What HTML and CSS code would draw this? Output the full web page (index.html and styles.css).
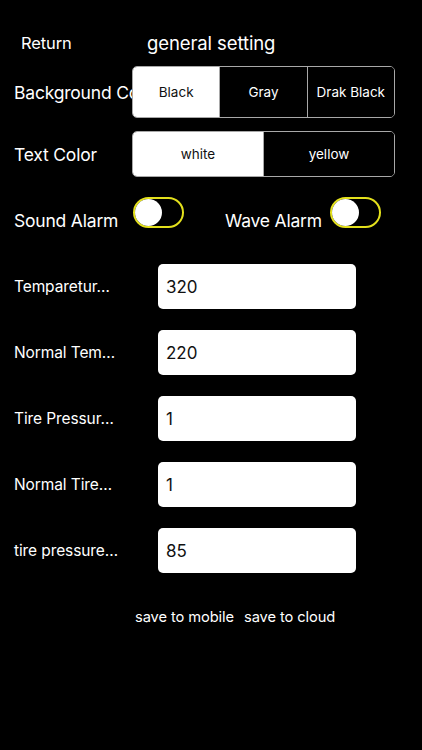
FILE: index.html
```html
<!DOCTYPE html>
<html>
<head>
<meta charset="utf-8">
<link rel="stylesheet" href="styles.css">
</head>
<body>
<div class="screen">
  <div class="header">
    <span class="return">Return</span>
    <span class="title">general setting</span>
  </div>

  <div class="seg-row seg-row-1">
    <span class="seg-label">Background Color</span>
    <div class="segmented seg-tall">
      <div class="seg seg-on">Black</div>
      <div class="seg">Gray</div>
      <div class="seg">Drak Black</div>
    </div>
  </div>

  <div class="seg-row seg-row-2">
    <span class="seg-label">Text Color</span>
    <div class="segmented seg-short">
      <div class="seg seg-on">white</div>
      <div class="seg">yellow</div>
    </div>
  </div>

  <div class="toggle-row">
    <span class="toggle-label sound">Sound Alarm</span>
    <div class="toggle"><div class="knob"></div></div>
    <span class="toggle-label wave">Wave Alarm</span>
    <div class="toggle"><div class="knob"></div></div>
  </div>

  <div class="fields">
    <div class="field">
      <span class="field-label">Temparetur…</span>
      <div class="input">320</div>
    </div>
    <div class="field">
      <span class="field-label">Normal Tem…</span>
      <div class="input">220</div>
    </div>
    <div class="field">
      <span class="field-label">Tire Pressur…</span>
      <div class="input">1</div>
    </div>
    <div class="field">
      <span class="field-label">Normal Tire…</span>
      <div class="input">1</div>
    </div>
    <div class="field">
      <span class="field-label">tire pressure…</span>
      <div class="input">85</div>
    </div>
  </div>

  <div class="actions">
    <span class="action">save to mobile</span>
    <span class="action">save to cloud</span>
  </div>
</div>
</body>
</html>
```

FILE: styles.css
```css
* { box-sizing: border-box; }

html, body {
  margin: 0;
  padding: 0;
  background: #000;
}

.screen {
  width: 422px;
  height: 750px;
  background: #000;
  color: #fff;
  font-family: Inter, "Liberation Sans", sans-serif;
  overflow: hidden;
}

.header {
  display: flex;
  align-items: center;
  padding: 30px 0 0 21px;
  height: 56px;
}

.return {
  flex: 0 0 126px;
  font-size: 16.5px;
  line-height: 26px;
  letter-spacing: -0.1px;
}

.title {
  font-size: 18.5px;
  line-height: 26px;
  letter-spacing: -0.1px;
}

.seg-row {
  display: flex;
  align-items: center;
  padding-left: 14px;
}

.seg-row-1 { margin-top: 10px; }
.seg-row-2 { margin-top: 13px; }

.seg-label {
  flex: 0 0 118px;
  width: 118px;
  min-width: 0;
  overflow: visible;
  white-space: nowrap;
  font-size: 17.5px;
  letter-spacing: -0.2px;
}

.segmented {
  flex: 0 0 263px;
  display: flex;
  width: 263px;
  border: 1px solid #a8a8a8;
  border-radius: 5px;
  overflow: hidden;
  background: #000;
}

.seg-tall { height: 52px; }
.seg-short { height: 46px; }

.seg {
  flex: 1 1 0;
  display: flex;
  align-items: center;
  justify-content: center;
  font-size: 13.5px;
  color: #fff;
  background: #000;
  border-left: 1px solid #a8a8a8;
}

.seg:first-child { border-left: none; }

.seg-on {
  background: #fff;
  color: #111;
}

.toggle-row {
  display: flex;
  align-items: flex-start;
  margin-top: 20px;
  padding-left: 14px;
  height: 31px;
}

.toggle-label {
  font-size: 17.5px;
  letter-spacing: -0.2px;
  margin-top: 14px;
  line-height: 20px;
  white-space: nowrap;
}

.sound { flex: 0 0 119px; }
.wave { flex: 0 0 105px; margin-left: 41px; }

.toggle {
  flex: 0 0 51px;
  width: 51px;
  height: 31px;
  border: 2px solid #e3e01c;
  border-radius: 16px;
  background: #000;
  padding: 0;
  display: flex;
  align-items: center;
}

.knob {
  width: 27px;
  height: 27px;
  border-radius: 50%;
  background: #fff;
}

.fields {
  display: flex;
  flex-direction: column;
  gap: 21px;
  margin-top: 36px;
  padding-left: 14px;
}

.field {
  display: flex;
  align-items: center;
  height: 45px;
}

.field-label {
  flex: 0 0 144px;
  font-size: 15.5px;
  letter-spacing: -0.1px;
  white-space: nowrap;
}

.input {
  width: 198px;
  height: 45px;
  background: #fff;
  border-radius: 5px;
  color: #111;
  font-size: 17px;
  display: flex;
  align-items: center;
  padding-left: 8px;
}

.actions {
  display: flex;
  gap: 10px;
  margin-top: 34px;
  padding-left: 135px;
  line-height: 20px;
}

.action {
  font-size: 14.7px;
  letter-spacing: -0.1px;
  color: #fff;
}
```
